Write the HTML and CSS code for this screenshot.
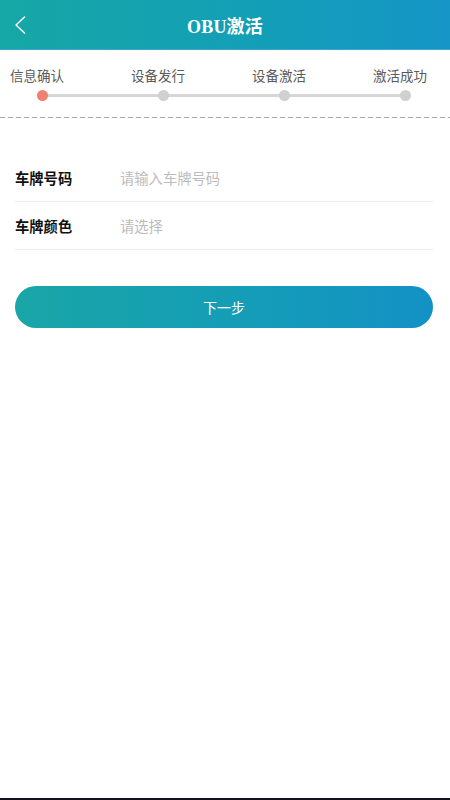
FILE: index.html
```html
<!DOCTYPE html>
<html lang="zh-CN">
<head>
<meta charset="utf-8">
<title>OBU激活</title>
<link rel="stylesheet" href="styles.css">
</head>
<body>
<div class="page">
  <header class="topbar">
    <div class="back">
      <svg width="12" height="18" viewBox="0 0 12 18"><polyline points="10.5,1 2,9 10.5,17" fill="none" stroke="#ffffff" stroke-width="1.4" stroke-linecap="round" stroke-linejoin="round"/></svg>
    </div>
    <div class="title">OBU激活</div>
    <div class="spacer"></div>
  </header>

  <section class="steps">
    <div class="step active"><span class="step-label">信息确认</span><span class="dot"></span></div>
    <div class="step"><span class="step-label">设备发行</span><span class="dot"></span></div>
    <div class="step"><span class="step-label">设备激活</span><span class="dot"></span></div>
    <div class="step"><span class="step-label">激活成功</span><span class="dot"></span></div>
  </section>
  <div class="dashed"></div>

  <section class="form">
    <div class="row"><span class="label">车牌号码</span><span class="placeholder">请输入车牌号码</span></div>
    <div class="row"><span class="label">车牌颜色</span><span class="placeholder">请选择</span></div>
  </section>

  <div class="actions">
    <button class="next">下一步</button>
  </div>

  <div class="fill"></div>
  <div class="bottom-bar"></div>
</div>
</body>
</html>
```

FILE: styles.css
```css
* { box-sizing: border-box; }
html, body { margin: 0; padding: 0; background: #ffffff; }
body {
  font-family: "Liberation Serif", "Noto Sans CJK SC", serif;
}
.page {
  width: 450px;
  height: 800px;
  display: flex;
  flex-direction: column;
  overflow: hidden;
}
.topbar {
  height: 50px;
  flex: none;
  display: grid;
  grid-template-columns: 50px 1fr 50px;
  align-items: center;
  background: linear-gradient(to right, #16a7a6 0%, #139fb6 55%, #1596c7 100%);
  border-bottom: 1px solid #3aa9cf;
}
.back {
  padding-left: 14px;
  display: flex;
  align-items: center;
  height: 100%;
  padding-top: 1px;
}
.title {
  text-align: center;
  color: #ffffff;
  font-size: 18px;
  font-weight: 600;
  letter-spacing: 0.2px;
}
.steps {
  position: relative;
  display: flex;
  justify-content: space-between;
  padding: 15px 23px 0 10px;
  font-family: "Noto Sans CJK SC", sans-serif;
}
.steps::before {
  content: "";
  position: absolute;
  left: 42px;
  right: 45px;
  top: 44px;
  height: 3px;
  background: #d6d6d6;
}
.step {
  display: flex;
  flex-direction: column;
  align-items: center;
  position: relative;
}
.step-label {
  font-size: 13.5px;
  line-height: 20px;
  color: #5a5a5a;
}
.dot {
  width: 11px;
  height: 11px;
  border-radius: 50%;
  background: #d0d0d0;
  margin-top: 5px;
  margin-left: 10px;
}
.step.active .dot { background: #f0806f; }
.dashed {
  margin-top: 16px;
  height: 1px;
  background: repeating-linear-gradient(to right, #a5a5a5 0 5px, transparent 5px 8px);
}
.form {
  margin-top: 36px;
  padding: 0 17px 0 15px;
  font-family: "Noto Sans CJK SC", sans-serif;
}
.row {
  height: 48px;
  display: flex;
  align-items: center;
  border-bottom: 1px solid #ececec;
}
.label {
  width: 105px;
  font-size: 14.3px;
  font-weight: 700;
  color: #111111;
}
.placeholder {
  font-size: 14.3px;
  color: #bcbcbc;
}
.actions {
  padding: 36px 17px 0 15px;
}
.next {
  width: 100%;
  height: 42px;
  border: none;
  border-radius: 21px;
  background: linear-gradient(to right, #19a6a7 0%, #149db7 55%, #1391c6 100%);
  color: #ffffff;
  font-family: "Noto Sans CJK SC", sans-serif;
  font-size: 14px;
  padding: 0;
  display: block;
}
.fill { flex: 1; }
.bottom-bar {
  height: 2px;
  background: #10141c;
  flex: none;
}
```
